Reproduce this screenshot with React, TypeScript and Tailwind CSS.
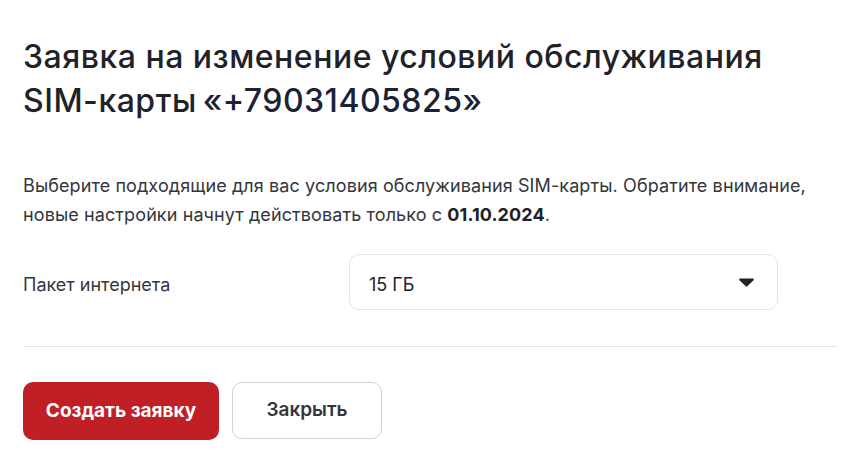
import React from "react";

const SimConditionsRequest = () => {
  return (
    <div className="min-h-screen bg-white font-['Inter',sans-serif] text-[#1f2229]">
      <div className="w-[814px] ml-[23px] pt-[35px]">
        <h1 className="text-[32px] leading-[44px] font-medium tracking-[0.5px]">
          Заявка на изменение условий обслуживания
          <br />
          SIM-карты<span className="ml-[6px] text-[#1b2236]">«+79031405825»</span>
        </h1>
        <p className="mt-[48px] text-[18px] leading-[29px] tracking-[0.1px] text-[#34363b]">
          Выберите подходящие для вас условия обслуживания SIM-карты. Обратите внимание,
          <br />
          новые настройки начнут действовать только с <b className="font-bold text-[#1f2229]">01.10.2024</b>.
        </p>
        <div className="mt-[25px] flex items-center">
          <span className="w-[326px] pt-[4px] text-[18px] text-[#34363b]">Пакет интернета</span>
          <button className="w-[429px] h-[56px] flex items-center justify-between pl-[19px] pr-[23px] border border-[#e4e5ea] rounded-[10px] bg-white">
            <span className="pt-[4px] text-[18px] text-[#1f2229]">15 ГБ</span>
            <svg width="15" height="9" viewBox="0 0 15 9">
              <path d="M1.2 0.5h12.6c0.9 0 1.4 1 0.8 1.7L8.3 8.2c-0.4 0.4-1.1 0.4-1.5 0L0.4 2.2C-0.2 1.5 0.3 0.5 1.2 0.5z" fill="#1f2229" />
            </svg>
          </button>
        </div>
        <div className="mt-[36px] border-t border-[#e4e5ea]" />
        <div className="mt-[35px] flex gap-[13px]">
          <button className="h-[58px] w-[196px] rounded-[10px] bg-[#c11f26] text-white text-[19px] font-bold">
            Создать заявку
          </button>
          <button className="h-[57px] w-[150px] rounded-[10px] border border-[#cfd2d8] bg-white text-[#34363b] text-[19px] font-semibold">
            Закрыть
          </button>
        </div>
      </div>
    </div>
  );
};

export default function App() {
  return <SimConditionsRequest />;
}
